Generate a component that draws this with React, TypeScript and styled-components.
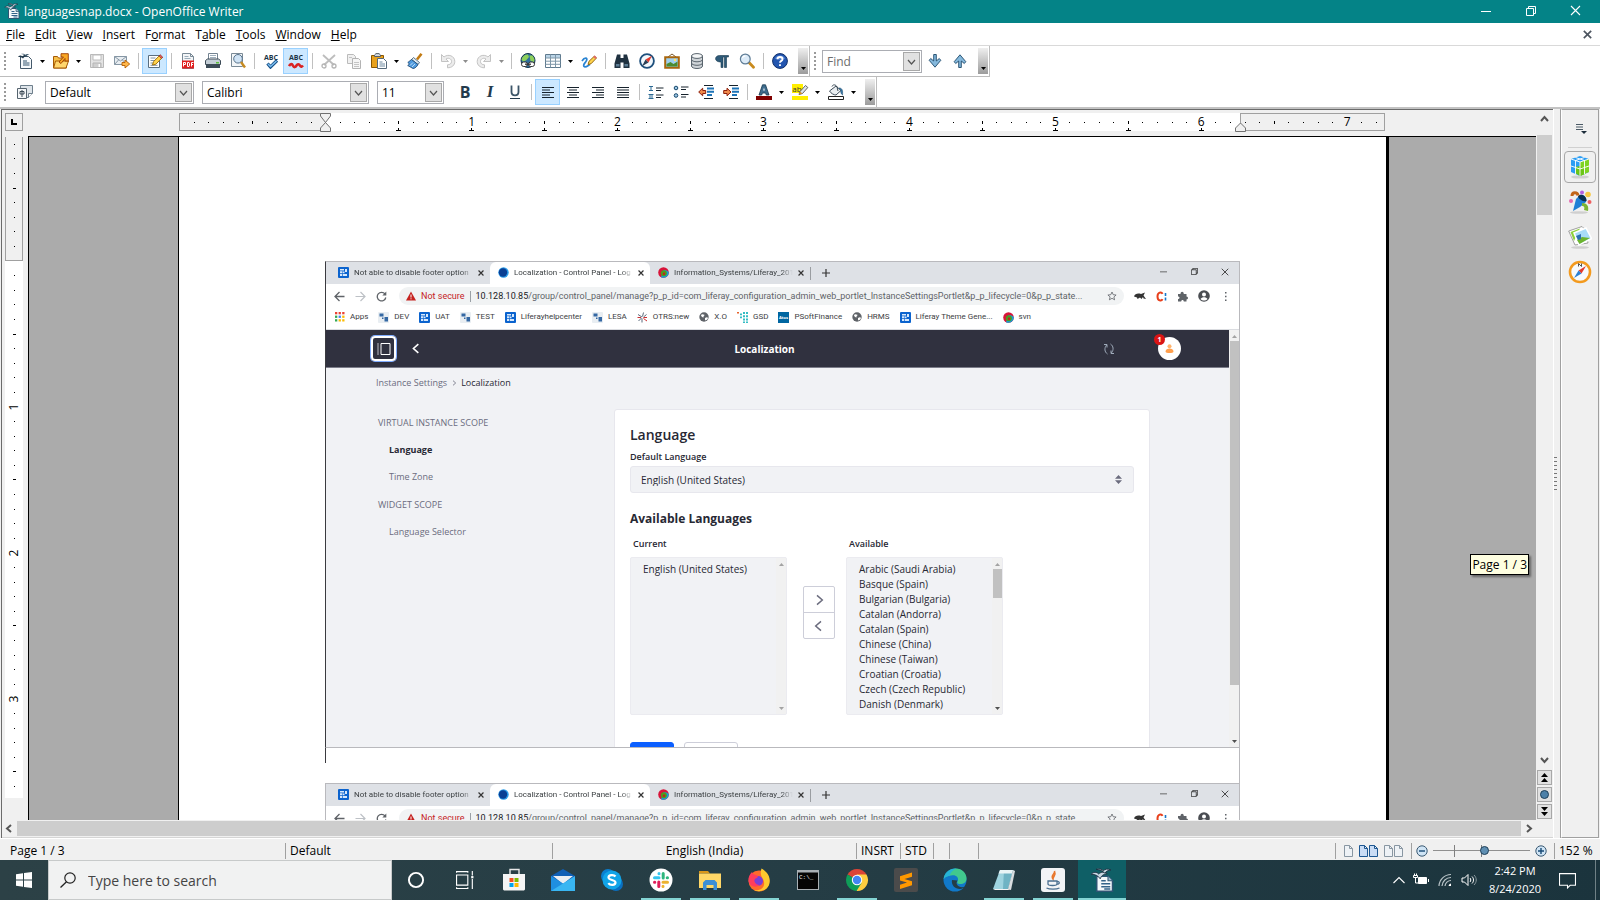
import React from "react";
import styled, { createGlobalStyle, css } from "styled-components";

const UI = `"Open Sans", "Noto Sans", "Liberation Sans", sans-serif`;

const GlobalStyle = createGlobalStyle`
  *, *::before, *::after { box-sizing: border-box; }
  body { margin: 0; font-family: ${UI}; font-size: 11px; color: #000; }
  button, input, select { font: inherit; color: inherit; margin: 0; }
  button { background: none; border: 0; padding: 0; display: flex; align-items: center; justify-content: center; }
  a { color: inherit; text-decoration: none; }
  ul { list-style: none; margin: 0; padding: 0; }
  h1, h2, h3, h4, p { margin: 0; }
  svg { display: block; flex: none; }
`;

/* ------------------------------------------------------------------ icons */

type IconProps = { size?: number; box?: string; children: React.ReactNode };
const Icon = ({ size = 16, box = "0 0 16 16", children }: IconProps) => (
  <svg width={size} height={size} viewBox={box} fill="none" aria-hidden="true">
    {children}
  </svg>
);

const WriterIcon = ({ size = 16 }: { size?: number }) => (
  <Icon size={size}>
    <path d="M4.500 5.500H12l3 3v7H4.500z" fill="#f4f8fb" stroke="#2c5573" />
    <path d="M12 5.500v3h3" fill="#9db9cc" stroke="#2c5573" strokeWidth=".7" />
    <path d="M7.500 8.500h3M7.500 10.500h6M7.500 12.500h6M9.500 14h4" stroke="#33638a" />
    <path d="M.8 4.200c1.500-1.700 3.700-1.700 5-.2 1.200-1.300 3.600-1.600 5.700-.2-2.300.2-4 1.200-4.700 3.400C5.500 5 3.200 4.200.8 4.200z" fill="#c9d8e3" stroke="#1b2f3f" strokeWidth=".6" />
    <path d="M4 .9c2-.7 3.800-.2 4.900.9C10.100.6 12 .4 14 1.300c-2 .2-3.400.9-4.200 2.200C8.700 1.900 6.500 1.100 4 .9z" fill="#c9d8e3" stroke="#1b2f3f" strokeWidth=".6" />
  </Icon>
);
const NewDoc = () => (
  <Icon>
    <path d="M3.500 3.500h8l3 3v9h-11z" fill="#f7fafc" stroke="#44596b" />
    <path d="M6 8h4M6 10h6.500M6 12h6.500" stroke="#33546f" />
    <path d="M1 4c1.500-2 3-2 4.500-.5 1-1.700 3-2 5-.5-2 0-3.500.8-4.500 2.500C5 4.300 3 4 1 4z" fill="#22394b" />
    <path d="M4 1c2-.8 3.500 0 4.300.8C9.300.8 11 .8 12.500 1.500c-1.500.2-2.700.8-3.500 1.900C7.900 2 6 1.300 4 1z" fill="#3f5a6e" />
  </Icon>
);
const OpenIcon = () => (
  <Icon>
    <path d="M.5 3.500h4l1 1.500h8v10H.5z" fill="#f7c14a" stroke="#a65a05" />
    <path d="M2.500 8h13l-2.500 7H.6z" fill="#ffd66e" stroke="#a65a05" />
    <path d="M6 9l4.500-5H8V.7h7.300V8H12V5.500L8 10.500z" fill="#f9a825" stroke="#9c3c00" strokeWidth=".9" />
  </Icon>
);
const SaveIcon = () => (
  <Icon>
    <path d="M1.500 1.500h13v13h-13z" fill="#e3e3e3" stroke="#b9b9b9" />
    <path d="M4 2h8v5H4z" fill="#fff" stroke="#bdbdbd" />
    <path d="M4 10h8v4.500H4z" fill="#cfcfcf" stroke="#b5b5b5" />
    <path d="M9.500 11h1.500v3H9.500z" fill="#fff" />
  </Icon>
);
const MailIcon = () => (
  <Icon>
    <path d="M.5 3.500h12v8H.5z" fill="#e8edf1" stroke="#8697a5" />
    <path d="M.5 3.500l6 4.500 6-4.500M.5 11.500L4.500 7M12.500 11.500L8.500 7" stroke="#8697a5" />
    <path d="M8 9.500h3V7l4.700 4-4.700 4v-2.500H8z" fill="#ffb74a" stroke="#b35c00" strokeWidth=".9" />
  </Icon>
);
const EditIcon = () => (
  <Icon>
    <path d="M1.500 2.500h11v12h-11z" fill="#fff" stroke="#5a6f80" />
    <path d="M3.500 5h5M3.500 7.500h5M3.500 10h3M3.500 12.300h7" stroke="#7d93a4" />
    <path d="M5.500 12l1-3.300L13 2l2.400 2.400-6.500 6.800z" fill="#ffd34d" stroke="#9b6a00" strokeWidth=".9" />
    <path d="M12 3l1.200-1.300 2.500 2.400-1.300 1.300z" fill="#e06060" stroke="#8a2020" strokeWidth=".6" />
  </Icon>
);
const PdfIcon = () => (
  <Icon>
    <path d="M2.500.5h8l3 3v12h-11z" fill="#f4f6f8" stroke="#7a8a96" />
    <path d="M10.500.5v3h3" stroke="#7a8a96" />
    <path d="M4.500 3.500h4M4.500 5.500h6" stroke="#9badba" />
    <path d="M2 7.500h12v8H2z" fill="#e02020" />
    <path d="M3.500 13.500v-4h2v2h-2M7.500 9.500v4h1.500l.5-.7V10.200L9 9.500zM11.500 13.500v-4h2M11.500 11.500h1.500" stroke="#fff" />
  </Icon>
);
const PrintIcon = () => (
  <Icon>
    <path d="M3.500.5h9V7h-9z" fill="#fff" stroke="#738391" />
    <path d="M5 2.500h6M5 4.500h6" stroke="#9fb0bd" />
    <path d="M.5 7.500l2-1.500h11l2 1.500v4H.5z" fill="#c4ced6" stroke="#3c4b57" />
    <path d="M1 11.500h14v3.500H1z" fill="#3c4b57" />
    <path d="M11 9h3v1.500h-3z" fill="#5bbf3a" />
  </Icon>
);
const PreviewIcon = () => (
  <Icon>
    <path d="M1.500.5h11v13h-11z" fill="#f3f6f8" stroke="#7a8a96" />
    <circle cx="8" cy="5.800" r="4.300" fill="#cfe3f5" stroke="#56718a" />
    <path d="M11 9l4 5.500" stroke="#c78b22" strokeWidth="2.400" />
  </Icon>
);
const AbcMark = ({ children }: { children: React.ReactNode }) => (
  <Icon>
    <text x="8" y="6.500" textAnchor="middle" fontSize="7" fontWeight="700" fontFamily={UI} fill="#1c3447">ABC</text>
    {children}
  </Icon>
);
const CutIcon = () => (
  <Icon>
    <path d="M2 2l11 10M14 2L3 12" stroke="#bdbdbd" strokeWidth="1.800" />
    <circle cx="3" cy="13" r="2" stroke="#b5b5b5" strokeWidth="1.300" />
    <circle cx="13" cy="13" r="2" stroke="#b5b5b5" strokeWidth="1.300" />
  </Icon>
);
const CopyIcon = () => (
  <Icon>
    <path d="M1.500 1.500h6l2 2v7h-8z" fill="#f0f0f0" stroke="#bbb" />
    <path d="M6.500 5.500h6l2 2v8h-8z" fill="#f5f5f5" stroke="#b3b3b3" />
    <path d="M3 4.500h3M8 9.500h5M8 11.500h5M8 13.500h5" stroke="#c4c4c4" />
  </Icon>
);
const PasteIcon = () => (
  <Icon>
    <path d="M.5 2.500h12v12H.5z" fill="#e8a11d" stroke="#8a5600" />
    <path d="M3.500 3.500V2L5 .6h3L9.500 2v1.500z" fill="#d6dade" stroke="#565f66" />
    <path d="M6.500 5.500h6l3 3v7h-9z" fill="#fff" stroke="#55697a" />
    <path d="M8.500 9h3M8.500 11h5.500M8.500 13h5.500" stroke="#6e8aa0" />
  </Icon>
);
const BrushIcon = () => (
  <Icon>
    <path d="M10 6.500L14.500.8" stroke="#c27a12" strokeWidth="2.600" />
    <path d="M6.500 4.500l6 5-1.500 2-6.500-5z" fill="#dfe8ef" stroke="#35556f" strokeWidth=".8" />
    <path d="M4.500 6.500l6.500 5c-1 2-3 4-5 4L.7 12.500l1.800-1.500L.8 9.500z" fill="#4f9ade" stroke="#16426f" strokeWidth=".8" />
    <path d="M3 12.500l3-3M5 14l3-3" stroke="#bcdcf7" />
  </Icon>
);
const UndoIcon = () => (
  <Icon>
    <path d="M1.500 1.500v7h7L6 6c2-1.500 5.500-.5 5.500 2.500 0 2-1.500 3.300-4 3.300v3c4.500 0 7.300-2.700 7.300-6.300C14.800 2.800 8 .5 4 4z" fill="#ececec" stroke="#bdbdbd" strokeWidth=".9" />
  </Icon>
);
const RedoIcon = () => (
  <Icon>
    <path d="M14.500 1.500v7h-7L10 6C8 4.500 4.500 5.500 4.500 8.500c0 2 1.500 3.300 4 3.300v3C4 14.800 1.200 12.100 1.200 8.500 1.200 2.800 8 .5 12 4z" fill="#ececec" stroke="#bdbdbd" strokeWidth=".9" />
  </Icon>
);
const LinkIcon = () => (
  <Icon>
    <circle cx="8" cy="7.500" r="7" fill="#2f6f9f" stroke="#12324a" />
    <path d="M1.500 6.500C2.500 2.500 6 1 8 1.500L9 4 6 7.500 3 8.500zM9.500 2.500h3l2 3.500-.5 3-3.500-1z" fill="#8ed05a" />
    <rect x="1.500" y="9" width="6" height="4.500" rx="2.200" fill="#fff" stroke="#333" />
    <rect x="8.500" y="9" width="6" height="4.500" rx="2.200" fill="#fff" stroke="#333" />
    <path d="M5 11.200h6" stroke="#333" strokeWidth="1.300" />
  </Icon>
);
const TableIcon = () => (
  <Icon>
    <path d="M.5 1.500h15v13H.5z" fill="#fff" stroke="#5f7a8e" />
    <path d="M1 2h14v3H1z" fill="#b9d3e6" />
    <path d="M.5 5h15M.5 8.200h15M.5 11.300h15M5.500 1.500v13M10.500 1.500v13" stroke="#7f97a8" />
  </Icon>
);
const DrawIcon = () => (
  <Icon>
    <path d="M1 8c2.500-4 6-3.500 4.500-.5-1 2.500-4 4-2.500 6 1.500 1.500 4-1 6-2" stroke="#2a84d2" strokeWidth="1.700" />
    <path d="M7 11.500l1-3.200L13.500 3l2 2-5.500 5.800z" fill="#ffd34d" stroke="#8a5a00" strokeWidth=".9" />
    <path d="M12.300 4l1.400-1.500 2 2-1.400 1.500z" fill="#e26a6a" />
  </Icon>
);
const BinocularsIcon = () => (
  <Icon>
    <path d="M3 1.500h3.500V5h3V1.500H13l2.500 9v4.500h-6V9.500h-3V15h-6v-4.500z" fill="#1f3140" />
    <path d="M2 11h3.500v2.500H2zM10.500 11H14v2.500h-3.500z" fill="#5d7d94" />
  </Icon>
);
const CompassIcon = () => (
  <Icon>
    <circle cx="8" cy="8" r="6.900" fill="#f2f8fd" stroke="#1d4f7c" strokeWidth="1.800" />
    <path d="M13 2.800L6.500 6.500l3 3z" fill="#e23a2e" />
    <path d="M3 13.200l3.500-6.700 3 3z" fill="#2b4056" />
  </Icon>
);
const GalleryIcon = () => (
  <Icon>
    <path d="M4 4l4-3 4 3" stroke="#7b5a2d" />
    <path d="M1.200 4.200h13.600v10.600H1.200z" fill="#9fd0ef" stroke="#a8660e" strokeWidth="2" />
    <path d="M2.500 11l4-2 3 2 4-2.500v5h-11z" fill="#4c8b2f" />
    <circle cx="11" cy="7" r="1.200" fill="#ffe46b" />
  </Icon>
);
const DatabaseIcon = () => (
  <Icon>
    <path d="M2.500 3v10c0 1.500 2.500 2.500 5.500 2.500s5.500-1 5.500-2.500V3z" fill="#cfd4d8" stroke="#59646d" />
    <ellipse cx="8" cy="3" rx="5.500" ry="2.400" fill="#f4f6f7" stroke="#59646d" />
    <path d="M2.500 6.500c0 1.300 2.500 2.300 5.500 2.300s5.500-1 5.500-2.300M2.500 10c0 1.300 2.500 2.300 5.500 2.300s5.500-1 5.500-2.300" stroke="#59646d" />
  </Icon>
);
const PilcrowIcon = () => (
  <Icon>
    <path d="M14.500 2.500V4h-2v10.500h-2V4H9v10.500H7V9C-.5 9 .5 2.500 5.500 2.500z" fill="#2e5a78" stroke="#16374d" strokeWidth=".6" />
  </Icon>
);
const MagnifierIcon = () => (
  <Icon>
    <path d="M10 9.500l4.500 4.700" stroke="#c98b1e" strokeWidth="2.800" strokeLinecap="round" />
    <circle cx="6.300" cy="6" r="4.900" fill="#dcebf8" stroke="#5f7d96" strokeWidth="1.200" />
    <path d="M3.500 5c.5-1.500 2-2 3-1.800" stroke="#fff" strokeWidth="1.200" />
  </Icon>
);
const HelpIcon = () => (
  <Icon>
    <circle cx="8" cy="8" r="7.400" fill="#2356b0" stroke="#0f2f6b" />
    <path d="M3 5.500C4.500 1.500 11.500 1.500 13 5.500 11 7 5 7 3 5.500z" fill="#5c8ad6" />
    <path d="M5.500 6.200c0-3 5-3 5 0 0 1.700-2.500 1.700-2.500 3.600M8 11.300v1.700" stroke="#fff" strokeWidth="1.900" />
  </Icon>
);
const ArrowDownIcon = () => (
  <Icon>
    <path d="M6.700 1.500h2.600V8l3-2.500 1.500 1.800L8 14.200 2.200 7.300l1.500-1.800 3 2.500z" fill="#84b8dc" stroke="#1e4a6b" strokeWidth=".9" />
  </Icon>
);
const ArrowUpIcon = () => (
  <Icon>
    <path d="M6.700 14.500h2.600V8l3 2.500 1.500-1.800L8 1.800 2.200 8.700l1.500 1.800 3-2.500z" fill="#84b8dc" stroke="#1e4a6b" strokeWidth=".9" />
  </Icon>
);
const StylesIcon = () => (
  <Icon>
    <path d="M3.500 1.500h12v8l-4 4h-8z" fill="#dfe5ea" stroke="#6e7f8c" />
    <path d="M15.500 9.500h-4v4" fill="#fff" stroke="#6e7f8c" />
    <path d="M.5 4.500h9v10h-9z" fill="#f4f6f8" stroke="#55636e" />
    <path d="M5 6v7M3 7.500h4v2.500H3z" stroke="#3c4b57" />
  </Icon>
);
const LetterIcon = ({ kind }: { kind: "B" | "I" | "U" }) => (
  <Icon size={20} box="0 0 20 20">
    {kind === "B" && (
      <text x="10" y="16" textAnchor="middle" fontFamily={UI} fontSize="16" fontWeight="700" fill="#233a4c">B</text>
    )}
    {kind === "I" && (
      <text x="10" y="15" textAnchor="middle" fontFamily="Liberation Serif, serif" fontSize="17" fontStyle="italic" fontWeight="700" fill="#233a4c">I</text>
    )}
    {kind === "U" && (
      <>
        <path d="M6.500 3.500V10c0 4.500 7 4.500 7 0V3.500" stroke="#3c5568" strokeWidth="1.800" />
        <path d="M5 16.500h10" stroke="#233a4c" />
      </>
    )}
  </Icon>
);
const AlignIcon = ({ kind }: { kind: "left" | "center" | "right" | "full" }) => {
  const widths = kind === "full" ? [12, 12, 12, 12, 12] : [12, 8, 12, 8, 12];
  return (
    <Icon>
      {widths.map((w, i) => {
        const x = kind === "right" ? 14 - w : kind === "center" ? 8 - w / 2 : 2;
        return <rect key={i} x={x} y={3 + i * 2.5} width={w} height="1" fill="#16222c" />;
      })}
    </Icon>
  );
};
const NumberListIcon = () => (
  <Icon>
    <path d="M1 2.500h4M3 2.500v4M1 6.500h4M.5 10.500h5M2 10.500v4M4 10.500v4M.5 14.500h5" stroke="#2c6a94" />
    <path d="M8 4h7.500M8 6.500h5M8 11h7.500M8 13.500h5" stroke="#16222c" />
  </Icon>
);
const BulletListIcon = () => (
  <Icon>
    <circle cx="3" cy="4" r="1.800" fill="#9cc6e4" stroke="#16486c" />
    <circle cx="3" cy="11.500" r="1.800" fill="#9cc6e4" stroke="#16486c" />
    <path d="M8 3h7.500M8 5.500h5M8 10.500h7.500M8 13h5" stroke="#16222c" />
  </Icon>
);
const IndentIcon = ({ out }: { out?: boolean }) => (
  <Icon>
    <path d="M6 1.500h9M6 14.500h9" stroke="#16222c" />
    <path d="M9 4.500h7M9 7.700h7M9 11h5" stroke="#1e74b8" strokeWidth="1.900" />
    {out ? (
      <path d="M.7 8l4-3.800v2.300h3v3h-3v2.300z" fill="#ef8a4c" stroke="#8d1f0b" />
    ) : (
      <path d="M8 8L4 4.200v2.300H.7v3H4v2.300z" fill="#ef8a4c" stroke="#8d1f0b" />
    )}
  </Icon>
);
const FontColorIcon = () => (
  <Icon>
    <path d="M6.500.8h3L13 11h-2.700l-.7-2H6.400l-.7 2H3z" fill="#3f6d8e" stroke="#17384f" strokeWidth=".8" />
    <path d="M7.200 6.500L8 3.500l.8 3z" fill="#fff" />
    <path d="M0 12h16v4H0z" fill="#800000" />
  </Icon>
);
const HighlightIcon = () => (
  <Icon size={20} box="0 0 20 20">
    <path d="M2 2h11v9H2zM2 14h16v4H2z" fill="#ffee00" />
    <text x="7" y="10" textAnchor="middle" fontFamily={UI} fontSize="8" fill="#333">ab</text>
    <path d="M9 12.500l1-3 5.500-6 2.300 2-5.300 6z" fill="#dde3e8" stroke="#555" strokeWidth=".9" />
    <path d="M9 12.500l1-3 2.500 2z" fill="#d09030" />
  </Icon>
);
const FillIcon = () => (
  <Icon>
    <path d="M1.500 7L8 2l5 4.500-5 4.500c-2 0-5-1.500-6.500-4z" fill="#e9edf0" stroke="#3c4b57" />
    <path d="M4 2.500C5 0 8 .5 9 3l1 4" stroke="#3c4b57" />
    <path d="M11 4c3 0 4 2 3.500 7-1.500-1-2-3-1.500-4.500z" fill="#3d82b5" stroke="#17486c" strokeWidth=".6" />
    <path d="M.5 12.500h15v3H.5z" fill="#fff" stroke="#222" />
  </Icon>
);

type ChevronProps = { dir: "up" | "down" | "left" | "right"; size?: number; color?: string; weight?: number };
const Chevron = ({ dir, size = 8, color = "#555", weight = 1.6 }: ChevronProps) => {
  const d = { up: "M1 6l3.500-4L8 6", down: "M1 3l3.500 4L8 3", left: "M6 1L2 4.500 6 8", right: "M3 1l4 3.500L3 8" }[dir];
  return (
    <Icon size={size} box="0 0 9 9"><path d={d} stroke={color} strokeWidth={weight} /></Icon>
  );
};
const Caret = ({ color = "#000", up }: { color?: string; up?: boolean }) => (
  <svg width="5" height="3" viewBox="0 0 5 3" aria-hidden="true"><path d={up ? "M0 3h5L2.500 0z" : "M0 0h5L2.500 3z"} fill={color} /></svg>
);
const Cross = ({ size = 11, color = "#fff", weight = 1.1 }: { size?: number; color?: string; weight?: number }) => (
  <Icon size={size} box="0 0 11 11"><path d="M1 1l9 9M10 1l-9 9" stroke={color} strokeWidth={weight} /></Icon>
);
const Restore = ({ size = 10, color = "#fff" }: { size?: number; color?: string }) => (
  <Icon size={size} box="0 0 10 10"><path d="M.5 2.500h7v7h-7zM2.500 2.500v-2h7v7h-2" stroke={color} /></Icon>
);
const Minimise = ({ size = 10, color = "#fff" }: { size?: number; color?: string }) => (
  <Icon size={size} box="0 0 10 10"><path d="M0 5.500h10" stroke={color} /></Icon>
);

/* ------------------------------------------------------------ application */

const Desktop = styled.div`
  display: flex;
  flex-direction: column;
  height: 100vh;
  background: #fff;
  overflow: hidden;
`;
const TitleBar = styled.header`
  flex: none;
  height: 23px;
  display: flex;
  align-items: center;
  gap: 4px;
  padding: 0 4px 2px;
  background: #048387;
  color: #fff;
  h1 { font-size: 12px; font-weight: 400; flex: 1; padding-top: 2px; }
`;
const WindowButton = styled.button`
  width: 41px;
  height: 20px;
`;
const MenuBar = styled.nav`
  flex: none;
  height: 23px;
  display: flex;
  align-items: center;
  gap: 10px;
  padding: 0 8px 0 6px;
  border-bottom: 1px solid #d9d9d9;
  font-size: 12px;
  button:last-child { margin-left: auto; }
`;
const Toolbars = styled.div`
  flex: none;
  border-bottom: 2px solid #c3c3c3;
`;
const ToolbarRow = styled.div`
  display: flex;
  width: max-content;
`;
const Toolbar = styled.div<{ $last?: boolean }>`
  height: ${(p) => (p.$last ? 30 : 31)}px;
  display: flex;
  align-items: center;
  border-right: 1px solid #bdbdbd;
  border-bottom: ${(p) => (p.$last ? 0 : 1)}px solid #bdbdbd;
`;
const Grip = styled.span`
  width: 2px;
  height: 18px;
  margin: 0 6px 0 4px;
  background: repeating-linear-gradient(#9a9a9a 0 2px, transparent 2px 4px);
`;
const ToolButton = styled.button<{ $on?: boolean }>`
  width: 25px;
  height: 26px;
  border: 1px solid ${(p) => (p.$on ? "#99d1ff" : "transparent")};
  background: ${(p) => (p.$on ? "#cce8ff" : "transparent")};
`;
const DropButton = styled.button`
  width: 11px;
  height: 26px;
`;
const Separator = styled.span`
  width: 8px;
  height: 16px;
  background: linear-gradient(#c0c0c0, #c0c0c0) center / 1px 100% no-repeat;
`;
const Overflow = styled.button`
  width: 10px;
  height: 26px;
  align-items: flex-end;
  padding-bottom: 4px;
  margin: 0 1px 0 6px;
  background: linear-gradient(#efefef, #9c9c9c);
`;
const Combo = styled.label<{ $w: number; $flush?: boolean }>`
  display: flex;
  align-items: center;
  width: ${(p) => p.$w}px;
  height: 23px;
  padding: 1px;
  margin-right: ${(p) => (p.$flush ? 0 : 8)}px;
  border: 1px solid #abadb3;
  background: #fff;
  font-size: 12px;
  select, input {
    flex: 1;
    min-width: 0;
    height: 100%;
    border: 0;
    outline: 0;
    background: none;
    appearance: none;
    padding: 0 3px;
  }
  input::placeholder { color: #6d6d6d; opacity: 1; }
`;
const StyleGroup = styled.div`
  display: flex;
  margin-left: 8px;
`;
const ComboArrow = styled.span`
  display: flex;
  align-items: center;
  justify-content: center;
  width: 17px;
  height: 19px;
  border: 1px solid #a8a8a8;
  background: #e1e1e1;
  pointer-events: none;
`;

type Tool = "|" | { n: string; i: React.ReactNode; on?: boolean; drop?: boolean; dim?: boolean };
const renderTools = (tools: Tool[]) =>
  tools.map((t, i) =>
    t === "|" ? (
      <Separator key={i} />
    ) : (
      <React.Fragment key={i}>
        <ToolButton $on={t.on} aria-label={t.n} aria-pressed={t.on}>{t.i}</ToolButton>
        {t.drop && <DropButton aria-label={`${t.n} options`}><Caret color={t.dim ? "#8d8d8d" : "#000"} /></DropButton>}
      </React.Fragment>
    )
  );

const standardTools: Tool[] = [
  { n: "New", i: <NewDoc />, drop: true },
  { n: "Open", i: <OpenIcon />, drop: true },
  { n: "Save", i: <SaveIcon /> },
  { n: "Document as E-mail", i: <MailIcon /> },
  "|",
  { n: "Edit File", i: <EditIcon />, on: true },
  "|",
  { n: "Export as PDF", i: <PdfIcon /> },
  { n: "Print", i: <PrintIcon /> },
  { n: "Page Preview", i: <PreviewIcon /> },
  "|",
  { n: "Spelling", i: <AbcMark><path d="M4.500 10.500l3 3.500L14 7.500" stroke="#17528a" strokeWidth="3.200" /><path d="M5 11l2.500 2.500L13.500 8" stroke="#7fc0f2" strokeWidth="1.400" /></AbcMark> },
  { n: "AutoSpellcheck", i: <AbcMark><path d="M1 13c1.500-2.500 3-2.500 4-.3s2.500 1.500 3.500-.2 2.500-1.500 3.500.2 2 1 3-.2" stroke="#d92323" strokeWidth="2.600" /></AbcMark>, on: true },
  "|",
  { n: "Cut", i: <CutIcon /> },
  { n: "Copy", i: <CopyIcon /> },
  { n: "Paste", i: <PasteIcon />, drop: true },
  { n: "Format Paintbrush", i: <BrushIcon /> },
  "|",
  { n: "Undo", i: <UndoIcon />, drop: true, dim: true },
  { n: "Redo", i: <RedoIcon />, drop: true, dim: true },
  "|",
  { n: "Hyperlink", i: <LinkIcon /> },
  { n: "Table", i: <TableIcon />, drop: true },
  { n: "Show Draw Functions", i: <DrawIcon /> },
  "|",
  { n: "Find & Replace", i: <BinocularsIcon /> },
  { n: "Navigator", i: <CompassIcon /> },
  { n: "Gallery", i: <GalleryIcon /> },
  { n: "Data Sources", i: <DatabaseIcon /> },
  { n: "Nonprinting Characters", i: <PilcrowIcon /> },
  { n: "Zoom", i: <MagnifierIcon /> },
  "|",
  { n: "Help", i: <HelpIcon /> },
];
const formatTools: Tool[] = [
  { n: "Bold", i: <LetterIcon kind="B" /> },
  { n: "Italic", i: <LetterIcon kind="I" /> },
  { n: "Underline", i: <LetterIcon kind="U" /> },
  "|",
  { n: "Align Left", i: <AlignIcon kind="left" />, on: true },
  { n: "Centered", i: <AlignIcon kind="center" /> },
  { n: "Align Right", i: <AlignIcon kind="right" /> },
  { n: "Justified", i: <AlignIcon kind="full" /> },
  "|",
  { n: "Numbering On/Off", i: <NumberListIcon /> },
  { n: "Bullets On/Off", i: <BulletListIcon /> },
  { n: "Decrease Indent", i: <IndentIcon out /> },
  { n: "Increase Indent", i: <IndentIcon /> },
  "|",
  { n: "Font Color", i: <FontColorIcon />, drop: true },
  { n: "Highlighting", i: <HighlightIcon />, drop: true },
  { n: "Background Color", i: <FillIcon />, drop: true },
];

/* -------------------------------------------------------------- workspace */

const Workspace = styled.main`
  flex: 1;
  min-height: 0;
  display: flex;
  background: #f0f0f0;
`;
const Editor = styled.section`
  flex: 1;
  min-width: 0;
  display: flex;
  flex-direction: column;
  margin-left: 1px;
  border-left: 1px solid #6b6b6b;
  border-top: 1px solid #6b6b6b;
`;
const EditorBody = styled.div`
  flex: 1;
  min-height: 0;
  display: flex;
`;
const Sheet = styled.div`
  flex: 1;
  min-width: 0;
  display: grid;
  grid-template: 26px minmax(0, 1fr) / 26px minmax(0, 1fr);
`;
const TabStop = styled.button`
  width: 18px;
  height: 18px;
  margin: 3px;
  border: 1px solid #a0a0a0;
`;
const RulerSlot = styled.div`
  display: flex;
  justify-content: center;
  padding: 3px 0 5px;
`;
const HRuler = styled.div`
  position: relative;
  flex: none;
  display: flex;
  width: 1206px;
  height: 18px;
`;
const marginArea = css`border: 1px solid #a0a0a0; background: #f0f0f0;`;
const HMargin = styled.div<{ $w: number }>`width: ${(p) => p.$w}px; ${marginArea}`;
const HBody = styled.div`flex: 1; background: #fff;`;
const Marks = styled.div<{ $vertical?: boolean }>`
  position: absolute;
  display: flex;
  ${(p) => (p.$vertical
    ? "flex-direction: column; left: 0; top: 0; width: 18px; height: 657px;"
    : "left: 8px; top: 0; width: 1197px; height: 18px;")}
`;
const Mark = styled.span<{ $stop?: boolean }>`
  position: relative;
  flex: 1 1 0;
  min-width: 0;
  min-height: 0;
  display: flex;
  align-items: center;
  justify-content: center;
  font-size: 12px;
  line-height: 14px;
  ${(p) => p.$stop && css`
    &::before, &::after { content: ""; position: absolute; background: #000; }
    &::before { left: 7px; bottom: 0; width: 1px; height: 3px; }
    &::after { left: 5px; bottom: 0; width: 5px; height: 1px; }
  `}
`;
const Tick = styled.i<{ $w: number; $h: number }>`
  width: ${(p) => p.$w}px;
  height: ${(p) => p.$h}px;
  background: #000;
`;
const Turned = styled.span`transform: rotate(-90deg);`;
const Handle = styled.span<{ $x: number }>`
  position: absolute;
  left: ${(p) => p.$x}px;
  top: 0;
`;
const VRuler = styled.div`
  position: relative;
  display: flex;
  flex-direction: column;
  width: 18px;
  margin: 1px 3px 22px;
  min-height: 0;
  overflow: hidden;
  background: #fff;
`;
const VMargin = styled.div`
  height: 124px;
  ${marginArea}
  border-top: 0;
`;
const Canvas = styled.div`
  position: relative;
  min-height: 0;
  overflow: hidden;
  display: flex;
  justify-content: center;
  align-items: flex-start;
  padding-left: 2px;
  border-left: 1px solid #000;
  border-top: 1px solid #000;
  background: #ababab;
`;
const Page = styled.article`
  flex: none;
  width: 1211px;
  min-height: 1500px;
  padding: 124px 146px 0;
  border-left: 1px solid #000;
  border-right: 3px solid #000;
  background: #fff;
`;
const Pictures = styled.div`
  width: 915px;
  border-right: 1px solid #b9b9bd;
`;
const Picture = styled.figure<{ $lead?: boolean }>`
  margin: 0;
  border-left: 1px solid ${(p) => (p.$lead ? "#3a3a3f" : "#b9b9bd")};
  border-top: 1px solid #b9b9bd;
  border-bottom: 1px solid #b9b9bd;
`;
const PictureGap = styled.div`
  height: 35px;
  background: linear-gradient(#3a3a3f, #3a3a3f) 0 0 / 1px 15px no-repeat;
`;
const PageTip = styled.div`
  position: absolute;
  right: 7px;
  top: 417px;
  padding: 0 1px;
  font-size: 12px;
  line-height: 19px;
  border: 1px solid #000;
  background: #ffffe1;
  box-shadow: 2px 2px 2px rgba(0, 0, 0, 0.4);
`;
const VScroll = styled.div`
  width: 16px;
  margin-left: 1px;
  display: flex;
  flex-direction: column;
  gap: 2px;
  padding: 0 1px 1px 0;
`;
const ScrollButton = styled.button`
  width: 15px;
  height: 18px;
  flex: none;
`;
const VTrack = styled.div`flex: 1; padding: 5px 0 0;`;
const VThumb = styled.div`height: 80px; width: 15px; background: #cdcdcd;`;
const PageButton = styled.button`
  width: 15px;
  height: 15px;
  flex: none;
  border: 1px solid #a8a8a8;
  background: #e1e1e1;
`;
const HScroll = styled.div`
  flex: none;
  height: 18px;
  display: flex;
  align-items: center;
  padding-right: 17px;
  border-bottom: 1px solid #d5d5d5;
`;
const HThumb = styled.div`flex: 1; height: 15px; background: #cdcdcd;`;
const Splitter = styled.div`
  width: 8px;
  display: flex;
  align-items: center;
  border-left: 1px solid #fff;
  border-right: 1px solid #a0a0a0;
  i {
    width: 3px;
    height: 34px;
    background: repeating-linear-gradient(#777 0 1px, transparent 1px 4px);
  }
`;
const Sidebar = styled.aside`
  width: 38px;
  margin-right: 1px;
  border: 1px solid #a0a0a0;
  border-left-color: #fff;
  display: flex;
  flex-direction: column;
  align-items: center;
  padding-top: 9px;
  gap: 3px;
  hr { width: 24px; margin: 5px 0 0; border: 0; border-top: 1px solid #d0d0d0; }
`;
const DeckButton = styled.button<{ $on?: boolean }>`
  width: 32px;
  height: 32px;
  border: 1px solid ${(p) => (p.$on ? "#a8a8a8" : "transparent")};
  border-radius: 4px;
`;

const marks = (from: number, to: number, vertical?: boolean) =>
  Array.from({ length: to - from + 1 }, (_, i) => {
    const k = from + i;
    const stop = !vertical && k > 0 && k <= 60 && k % 5 === 0;
    let body = <Tick $w={1} $h={1} />;
    if (k === 0) body = <></>;
    else if (k % 10 === 0) body = vertical ? <Turned>{k / 10}</Turned> : <>{k / 10}</>;
    else if (k % 5 === 0) body = vertical ? <Tick $w={3} $h={1} /> : <Tick $w={1} $h={3} />;
    return <Mark key={k} $stop={stop}>{body}</Mark>;
  });

/* ------------------------------------------------- browser shown in page */

const Browser = styled.div`
  background: #fff;
  color: #3c4043;
  font-family: Roboto, ${UI};
  font-size: 8px;
  line-height: 12px;
`;
const TabStrip = styled.div`
  display: flex;
  align-items: center;
  height: 22px;
  background: #dee1e6;
`;
const Tab = styled.div<{ $on?: boolean }>`
  display: flex;
  align-items: center;
  gap: 5px;
  width: 160px;
  height: 22px;
  padding: 0 6px 1px 8px;
  border-radius: 6px 6px 0 0;
  background: ${(p) => (p.$on ? "#fff" : "transparent")};
  &:first-child { margin-left: 4px; }
  span {
    flex: 1;
    min-width: 0;
    overflow: hidden;
    white-space: nowrap;
    mask-image: linear-gradient(90deg, #000 90%, transparent);
  }
`;
const TabDivider = styled.i`width: 1px; height: 13px; background: #9a9da1;`;
const BrowserWin = styled.div`
  display: flex;
  margin-left: auto;
  padding-bottom: 3px;
  button { width: 31px; height: 14px; }
  button:last-child { width: 29px; }
`;
const AddressRow = styled.div`
  display: flex;
  align-items: center;
  height: 24px;
  padding: 0 8px;
  gap: 10px;
  color: #5f6368;
`;
const AddressBar = styled.div`
  flex: 1;
  min-width: 0;
  display: flex;
  align-items: center;
  gap: 5px;
  height: 18px;
  margin: 0 0 0 2px;
  padding: 0 7px;
  border-radius: 9px;
  background: #f1f3f4;
  font-size: 9px;
  b { font-weight: 400; color: #c5221f; }
  i { width: 1px; height: 11px; background: #9aa0a6; }
  span { flex: 1; min-width: 0; white-space: nowrap; overflow: hidden; }
  em { font-style: normal; color: #202124; }
`;
const Bookmarks = styled.ul`
  display: flex;
  align-items: center;
  height: 22px;
  padding: 0 9px 3px;
  gap: 10px;
  border-bottom: 1px solid #dadce0;
  li a { display: flex; align-items: center; gap: 5px; white-space: nowrap; }
`;
const Portal = styled.div`
  display: flex;
  height: 417px;
  font-family: ${UI};
  font-size: 9px;
  color: #6b6c7e;
`;
const PortalMain = styled.div`
  flex: 1;
  min-width: 0;
  overflow: hidden;
  background: #f1f2f5;
`;
const ControlBar = styled.header`
  display: flex;
  align-items: center;
  height: 38px;
  padding: 0 48px 0 45px;
  border-bottom: 1px solid #7c7d8a;
  background: #30313f;
  color: #fff;
  h2 {
    flex: 1;
    padding-left: 4px;
    text-align: center;
    font-size: 10px;
    font-weight: 700;
  }
`;
const MenuToggle = styled.button`
  width: 25px;
  height: 25px;
  border: 2px solid #fff;
  border-radius: 4px;
  box-shadow: 0 0 0 1px #80acff;
`;
const BackLink = styled.a`margin-left: 15px;`;
const Avatar = styled.span`
  position: relative;
  display: flex;
  align-items: center;
  justify-content: center;
  width: 23px;
  height: 23px;
  margin-left: 43px;
  border-radius: 50%;
  background: #fff;
`;
const Badge = styled.span`
  position: absolute;
  left: -4px;
  top: -3px;
  width: 11px;
  height: 11px;
  border-radius: 50%;
  background: #da1414;
  color: #fff;
  font-size: 7px;
  line-height: 11px;
  font-weight: 700;
  text-align: center;
`;
const Crumbs = styled.nav`
  display: flex;
  align-items: center;
  gap: 4px;
  height: 30px;
  padding-left: 50px;
  b { font-weight: 400; color: #272833; }
`;
const PortalBody = styled.div`
  display: flex;
  padding: 11px 79px 0 52px;
`;
const ScopeNav = styled.nav`
  width: 236px;
  line-height: 27px;
  h3 { font-size: 9px; font-weight: 400; }
  ul { padding: 0 0 1px 11px; }
  b { color: #272833; }
`;
const Card = styled.section`
  flex: 1;
  height: 400px;
  padding: 15px 15px 0;
  border: 1px solid #e7e7ed;
  border-radius: 3px;
  background: #fff;
  color: #272833;
  h3 { font-size: 14px; line-height: 20px; font-weight: 600; }
  h4 { font-size: 12px; line-height: 18px; font-weight: 700; margin: 17px 0 0; }
`;
const FieldLabel = styled.label`
  display: block;
  font-weight: 600;
  line-height: 12px;
  padding: 6px 0 3px;
`;
const SelectBox = styled.span`
  display: flex;
  align-items: center;
  height: 27px;
  padding-right: 10px;
  border: 1px solid #e7e7ed;
  border-radius: 3px;
  background: #f1f2f5;
  select {
    flex: 1;
    border: 0;
    outline: 0;
    padding: 0 10px;
    background: none;
    appearance: none;
    font-size: 10px;
  }
`;
const Transfer = styled.div`
  display: flex;
  align-items: flex-start;
`;
const ListColumn = styled.div`
  width: 157px;
  label { display: block; font-weight: 600; line-height: 14px; padding: 9px 0 6px 3px; }
`;
const ListFrame = styled.div`
  display: flex;
  height: 158px;
  border: 1px solid #ebebf0;
  border-radius: 2px;
  background: #f1f2f5;
  overflow: hidden;
  select {
    flex: 1;
    min-width: 0;
    border: 0;
    outline: 0;
    padding: 4px 0 0 10px;
    background: none;
    font-size: 10px;
    scrollbar-width: none;
    overflow: hidden;
  }
  option { height: 15px; min-height: 15px; line-height: 15px; padding: 0 2px; }
`;
const MiniTrack = styled.div`
  width: 10px;
  display: flex;
  flex-direction: column;
  align-items: center;
  justify-content: space-between;
  padding: 5px 0 4px;
  background: #f1f1f1;
`;
const MiniThumb = styled.i<{ $h: number }>`
  width: 9px;
  height: ${(p) => p.$h}px;
  margin: 3px 0 auto;
  background: #c1c1c1;
`;
const MoveButtons = styled.div`
  width: 32px;
  margin: 58px 11px 0 16px;
  border: 1px solid #cdced9;
  border-radius: 2px;
  button { width: 30px; height: 25px; }
  button + button { height: 26px; border-top: 1px solid #cdced9; }
`;
const FormActions = styled.div`
  display: flex;
  gap: 10px;
  margin-top: 27px;
`;
const ActionButton = styled.button<{ $primary?: boolean }>`
  width: ${(p) => (p.$primary ? 44 : 54)}px;
  height: 26px;
  border-radius: 3px;
  border: 1px solid ${(p) => (p.$primary ? "#0b5fff" : "#cdced9")};
  background: ${(p) => (p.$primary ? "#0b5fff" : "#fff")};
`;

const LiferayIcon = ({ light }: { light?: boolean }) => (
  <Icon size={11} box="0 0 11 11">
    <rect width="11" height="11" rx="1" fill={light ? "#e9eef2" : "#0b63ce"} />
    {light ? (
      <path d="M1.500 1.500h4v3h-4zM6.500 5h3.500v4.500H6.500zM4 5.500h1.500V7H4z" fill="#3568a3" />
    ) : (
      <path d="M2 2h4v1.600H2zM2 4.300h2.500v2H2zM7 2h2v3H7zM5 4.500h1.500v1.800H5zM2 7h2v2H2zM4.700 7h4.300v2H4.700z" fill="#d6e8fb" />
    )}
  </Icon>
);
const SvnIcon = () => (
  <Icon size={11} box="0 0 11 11">
    <circle cx="5.500" cy="5.500" r="5.300" fill="#d8143a" />
    <path d="M10.800 5.500A5.300 5.300 0 0 1 3 10.200L5.500 3c3 0 5 1 5.300 2.500z" fill="#16a0d2" />
    <circle cx="5.800" cy="6.300" r="3" fill="#4e9a1e" />
    <circle cx="6" cy="6.800" r="1.200" fill="#c4221c" />
  </Icon>
);
const GlobeIcon = () => (
  <Icon size={10} box="0 0 10 10">
    <circle cx="5" cy="5" r="4.700" fill="#5f6368" />
    <path d="M2 3c1.500-1.500 2.500 0 3.500-.3C6 3.500 4 4 4.500 5S2 5 2 3zM6 6c1.500-1 2.500-1 3 0-.5 1.500-2 2.500-3 2.300z" fill="#fff" />
  </Icon>
);
const AppsIcon = () => (
  <Icon size={10} box="0 0 10 10">
    {["#ea4335", "#ea4335", "#ea4335", "#34a853", "#4285f4", "#fbbc05", "#34a853", "#fbbc05", "#fbbc05"].map((c, i) => (
      <rect key={i} x={(i % 3) * 3.6} y={Math.floor(i / 3) * 3.6} width="2.300" height="2.300" fill={c} />
    ))}
  </Icon>
);
const StarburstIcon = () => (
  <Icon size={11} box="0 0 11 11">
    <path d="M5.500 4.500l1-4M5 6.500v4M1 2.500l4 2.500M9.500 2.500L6.500 5M1.500 9l3-3" stroke="#5b6b7c" />
    <path d="M6.500 6.500l3.500 2.500M.5 5.500H4M6.500 5.500H10" stroke="#cc2f33" />
  </Icon>
);
const GsdIcon = () => (
  <Icon size={11} box="0 0 11 11">
    <path d="M4 1.500v1.700M7 0v2M10 0v2M4 4.500v1.700M7 3.300v2M10 3.300v2M7 6.500v2M10 6.500v2M10 9.500V11M7 9.500V11" stroke="#35bdc4" strokeWidth="2" />
    <path d="M0 0h2v1.500H0z" fill="#e6642d" />
  </Icon>
);
const PsoftIcon = () => (
  <Icon size={11} box="0 0 11 11">
    <rect width="11" height="11" fill="#0066a1" />
    <text x="5.500" y="7" textAnchor="middle" fontSize="4" fontWeight="700" fontFamily={UI} fill="#fff">Atos</text>
  </Icon>
);
const LocalIcon = () => (
  <Icon size={11} box="0 0 11 11">
    <circle cx="5.500" cy="5.500" r="5.200" fill="#2b9be8" />
    <circle cx="5" cy="5.500" r="4.200" fill="#0b3f93" />
  </Icon>
);

const bookmarks: [string, React.ReactNode][] = [
  ["Apps", <AppsIcon />],
  ["DEV", <LiferayIcon light />],
  ["UAT", <LiferayIcon />],
  ["TEST", <LiferayIcon light />],
  ["Liferayhelpcenter", <LiferayIcon />],
  ["LESA", <LiferayIcon light />],
  ["OTRS:new", <StarburstIcon />],
  ["X.O", <GlobeIcon />],
  ["GSD", <GsdIcon />],
  ["PSoftFinance", <PsoftIcon />],
  ["HRMS", <GlobeIcon />],
  ["Liferay Theme Gene...", <LiferayIcon />],
  ["svn", <SvnIcon />],
];
const tabs: [string, React.ReactNode][] = [
  ["Not able to disable footer option", <LiferayIcon />],
  ["Localization - Control Panel - Log", <LocalIcon />],
  ["Information_Systems/Liferay_201", <SvnIcon />],
];
const languages = [
  "Arabic (Saudi Arabia)", "Basque (Spain)", "Bulgarian (Bulgaria)", "Catalan (Andorra)", "Catalan (Spain)",
  "Chinese (China)", "Chinese (Taiwan)", "Croatian (Croatia)", "Czech (Czech Republic)", "Danish (Denmark)", "Dutch (Belgium)",
];

const BrowserChrome = () => (
  <>
    <TabStrip>
      {tabs.map(([name, icon], i) => (
        <Tab key={name} $on={i === 1}>
          {icon}
          <span>{name}</span>
          <button aria-label={`Close ${name}`}><Cross size={6} color="#333" weight={2.2} /></button>
        </Tab>
      ))}
      <TabDivider />
      <button aria-label="New tab">
        <Icon size={30} box="0 0 30 30"><path d="M11 15h8M15 11v8" stroke="#333" strokeWidth="1.200" /></Icon>
      </button>
      <BrowserWin>
        <button aria-label="Minimise"><Minimise size={7} color="#333" /></button>
        <button aria-label="Restore"><Restore size={7} color="#111" /></button>
        <button aria-label="Close"><Cross size={8} color="#333" weight={1.2} /></button>
      </BrowserWin>
    </TabStrip>
    <AddressRow>
      <Icon size={11} box="0 0 11 11"><path d="M10.500 5.500H1.500M5.500 1L1 5.500 5.500 10" stroke="#5f6368" strokeWidth="1.300" /></Icon>
      <Icon size={11} box="0 0 11 11"><path d="M.5 5.500h9M5.500 1L10 5.500 5.500 10" stroke="#bdc1c6" strokeWidth="1.200" /></Icon>
      <Icon size={11} box="0 0 11 11"><path d="M9 3A4.300 4.300 0 1 0 9.800 6.500" stroke="#5f6368" strokeWidth="1.300" /><path d="M10.300.5v4h-4z" fill="#5f6368" /></Icon>
      <AddressBar>
        <Icon size={10} box="0 0 10 10"><path d="M5 .5L10 9.500H0z" fill="#c5221f" /><path d="M5 3.500v3M5 7.300v1" stroke="#fff" /></Icon>
        <b>Not secure</b>
        <i />
        <span><em>10.128.10.85</em>/group/control_panel/manage?p_p_id=com_liferay_configuration_admin_web_portlet_InstanceSettingsPortlet&amp;p_p_lifecycle=0&amp;p_p_state...</span>
        <Icon size={10} box="0 0 10 10"><path d="M5 1l1.200 2.700 2.900.3-2.200 1.900.7 2.900L5 7.300 2.400 8.800l.7-2.900L.9 4l2.900-.3z" stroke="#5f6368" strokeWidth=".8" /></Icon>
      </AddressBar>
      <Icon size={12} box="0 0 12 12"><path d="M0 6.500C1 3.500 4 3 7 4l4-1.500L9.500 5.500 12 9l-2.500-.5L9 7 7.500 9 6 7.500 3.500 9 3 7.500z" fill="#333" /></Icon>
      <Icon size={11} box="0 0 11 11"><path d="M6.500 2.800C5.500.5 1.500 1 1.500 5.500s4 5 5 2.700" stroke="#e8401c" strokeWidth="2" /><path d="M9.500 2v3M9.500 6.500v3" stroke="#1877c9" strokeWidth="1.600" /></Icon>
      <Icon size={11} box="0 0 11 11"><path d="M1 3h2.500c0-3 3.300-3 3.300 0H9.500v2.500c2 0 2 3 0 3V10.500H6.800c0-2-2.600-2-2.600 0H1V8C3 8 3 5.500 1 5.500z" fill="#5f6368" /></Icon>
      <Icon size={12} box="0 0 12 12"><circle cx="6" cy="6" r="5.800" fill="#4a4d52" /><circle cx="6" cy="4.500" r="2" fill="#fff" /><path d="M2.500 9c1.500-2.500 5.500-2.500 7 0-2 2-5 2-7 0z" fill="#fff" /></Icon>
      <Icon size={11} box="0 0 11 11"><path d="M5 1h1.500v1.500H5zM5 4.700h1.500v1.500H5zM5 8.400h1.500v1.500H5z" fill="#5f6368" /></Icon>
    </AddressRow>
  </>
);

const LanguageList = ({ id, label, items, thumb }: { id: string; label: string; items: string[]; thumb?: boolean }) => (
  <ListColumn>
    <label htmlFor={id}>{label}</label>
    <ListFrame>
      <select id={id} multiple>
        {items.map((l) => <option key={l}>{l}</option>)}
      </select>
      <MiniTrack>
        <Caret up color="#a3a3a3" />
        {thumb && <MiniThumb $h={29} />}
        <Caret color={thumb ? "#505050" : "#a3a3a3"} />
      </MiniTrack>
    </ListFrame>
  </ListColumn>
);

const BrowserPicture = () => (
  <Browser>
    <BrowserChrome />
    <Bookmarks>
      {bookmarks.map(([name, icon]) => (
        <li key={name}><a href="#bookmark">{icon}{name}</a></li>
      ))}
    </Bookmarks>
    <Portal>
      <PortalMain>
        <ControlBar>
          <MenuToggle aria-label="Product menu">
            <Icon size={14} box="0 0 14 14"><path d="M1 1v12" stroke="#b7b8c2" /><path d="M4 1.500h9v11H4z" stroke="#fff" /></Icon>
          </MenuToggle>
          <BackLink href="#back" aria-label="Back"><Chevron dir="left" size={11} color="#fff" weight={1.3} /></BackLink>
          <h2>Localization</h2>
          <Icon size={12} box="0 0 12 12"><path d="M4.500 11C1.500 9 1 5 3.700 2M1 1.500h3v3M7.500 1C10.500 3 11 7 8.300 10M11 10.500H8v-3" stroke="#9fabba" /></Icon>
          <Avatar>
            <Icon size={9} box="0 0 9 9"><circle cx="4.500" cy="2.200" r="2" fill="#ffb46e" /><path d="M.5 7.500c0-4 8-4 8 0 0 2-8 2-8 0z" fill="#ff9f4d" /></Icon>
            <Badge>1</Badge>
          </Avatar>
        </ControlBar>
        <Crumbs aria-label="Breadcrumb">
          <a href="#settings">Instance Settings</a>
          <Chevron dir="right" size={6} color="#6b6c7e" weight={1.2} />
          <b>Localization</b>
        </Crumbs>
        <PortalBody>
          <ScopeNav>
            <h3>VIRTUAL INSTANCE SCOPE</h3>
            <ul>
              <li><a href="#language"><b>Language</b></a></li>
              <li><a href="#time-zone">Time Zone</a></li>
            </ul>
            <h3>WIDGET SCOPE</h3>
            <ul>
              <li><a href="#selector">Language Selector</a></li>
            </ul>
          </ScopeNav>
          <Card>
            <h3>Language</h3>
            <FieldLabel htmlFor="default-language">Default Language</FieldLabel>
            <SelectBox>
              <select id="default-language" defaultValue="us"><option value="us">English (United States)</option></select>
              <Icon size={9} box="0 0 9 9"><path d="M1 3.700L4.500 0 8 3.700zM1 5.300L4.500 9 8 5.300z" fill="#6b6c7e" /></Icon>
            </SelectBox>
            <h4>Available Languages</h4>
            <Transfer>
              <LanguageList id="current" label="Current" items={["English (United States)"]} />
              <MoveButtons>
                <button aria-label="Move right"><Chevron dir="right" size={12} color="#6b6c7e" weight={1.1} /></button>
                <button aria-label="Move left"><Chevron dir="left" size={12} color="#6b6c7e" weight={1.1} /></button>
              </MoveButtons>
              <LanguageList id="available" label="Available" items={languages} thumb />
            </Transfer>
            <FormActions>
              <ActionButton $primary aria-label="Save" />
              <ActionButton aria-label="Cancel" />
            </FormActions>
          </Card>
        </PortalBody>
      </PortalMain>
      <MiniTrack>
        <Caret up color="#a3a3a3" />
        <MiniThumb $h={344} />
        <Caret color="#505050" />
      </MiniTrack>
    </Portal>
  </Browser>
);

/* ------------------------------------------------------ status & taskbar */

const StatusBar = styled.footer`
  flex: none;
  height: 22px;
  display: flex;
  align-items: center;
  padding-top: 2px;
  background: #f0f0f0;
  border-top: 1px solid #fff;
`;
const Cell = styled.div<{ $w?: number; $center?: boolean }>`
  ${(p) => (p.$w ? `width: ${p.$w}px;` : "flex: 1;")}
  height: 16px;
  display: flex;
  align-items: center;
  justify-content: ${(p) => (p.$center ? "center" : "flex-start")};
  gap: 5px;
  padding-left: ${(p) => (p.$center ? 0 : 4)}px;
  white-space: nowrap;
  font-size: 12px;
  border-left: 1px solid #a0a0a0;
  &:first-child { border: 0; padding-left: 10px; }
`;
const ZoomSlider = styled.input`
  appearance: none;
  width: 97px;
  height: 12px;
  background:
    linear-gradient(#808080, #808080) 21px 0 / 1px 100% no-repeat,
    linear-gradient(#808080, #808080) 48px 0 / 1px 100% no-repeat,
    linear-gradient(#909090, #909090) 0 5px / 100% 1px no-repeat;
  &::-webkit-slider-thumb {
    appearance: none;
    width: 9px;
    height: 9px;
    border: 1px solid #1f3f58;
    border-radius: 50%;
    background: #5f8fb3;
  }
`;
const Taskbar = styled.footer`
  flex: none;
  height: 40px;
  display: flex;
  background: linear-gradient(90deg, #2c4146, #253d45 50%, #1b343d);
  color: #fff;
`;
const StartButton = styled.button`width: 48px;`;
const SearchBox = styled.label`
  width: 344px;
  display: flex;
  align-items: center;
  gap: 12px;
  padding-left: 11px;
  border: 1px solid #c7caca;
  background: #f1f2f2;
  input {
    flex: 1;
    min-width: 0;
    border: 0;
    outline: 0;
    padding: 0;
    background: none;
    font-size: 14px;
  }
  input::placeholder { color: #444; opacity: 1; }
`;
const TaskButton = styled.button<{ $state?: "open" | "active" }>`
  width: 48px;
  margin-right: 1px;
  background-color: ${(p) => (p.$state === "active" ? "#0f5f66" : "transparent")};
  ${(p) => p.$state && css`
    background-image: linear-gradient(#84d4d3, #84d4d3);
    background-position: center bottom;
    background-repeat: no-repeat;
    background-size: ${p.$state === "active" ? 48 : 40}px 2px;
  `}
`;
const Tray = styled.div`
  margin-left: auto;
  display: flex;
  align-items: center;
  gap: 8px;
`;
const Clock = styled.time`
  width: 60px;
  text-align: center;
  line-height: 18px;
`;
const Notify = styled.button`
  width: 40px;
  height: 40px;
  margin: 0 -8px 0 -6px;
`;
const ShowDesktop = styled.button`
  width: 5px;
  height: 40px;
  margin-left: 8px;
  border-left: 1px solid #6f8186;
`;

const apps: { n: string; s?: "open" | "active"; i: React.ReactNode }[] = [
  { n: "Cortana", i: <Icon size={18}><circle cx="8" cy="8" r="6.300" stroke="#fff" strokeWidth="1.700" /></Icon> },
  { n: "Task View", i: <Icon size={18}><path d="M.5 3.500h10v9H.5zM.5 1.500V.5h10v1M.5 14.500v1h10v-1M14.500 0v4M14.500 7v9" stroke="#fff" /><path d="M13.500 4.500h2v2h-2z" fill="#fff" /></Icon> },
  { n: "Microsoft Store", i: (
    <Icon size={24} box="0 0 24 24"><path d="M8 6V1.500h9V6" stroke="#e8e8e8" strokeWidth="1.400" /><path d="M1 6h22v15.500l-1 1H2l-1-1z" fill="#f5f5f5" /><path d="M7.500 10h4v4h-4z" fill="#f25022" /><path d="M12.500 10h4v4h-4z" fill="#7fba00" /><path d="M7.500 15h4v4h-4z" fill="#00a4ef" /><path d="M12.500 15h4v4h-4z" fill="#ffb900" /></Icon>
  ) },
  { n: "Mail", i: (
    <Icon size={24} box="0 0 24 24"><path d="M0 8l12-7 12 7v15H0z" fill="#0f5fb5" /><path d="M2 8h20l-10 8z" fill="#e9eef2" /><path d="M0 8l24 15H0z" fill="#1f8fe0" /><path d="M24 8v15H0z" fill="#39b6f2" /></Icon>
  ) },
  { n: "Skype", i: (
    <Icon size={24} box="0 0 24 24"><circle cx="8" cy="8" r="7" fill="#0a7fd0" /><circle cx="16" cy="16" r="7" fill="#0a6fc0" /><circle cx="12" cy="12" r="9.500" fill="#11a4e8" /><path d="M15.500 8.500C14 6.500 8.500 6.500 8.500 9.500s7 2 7 5-5.500 3-7.200.6" stroke="#fff" strokeWidth="2.200" /></Icon>
  ) },
  { n: "Slack", s: "open", i: (
    <Icon size={24} box="0 0 24 24"><circle cx="12" cy="12" r="11.500" fill="#fff" /><g strokeWidth="3" strokeLinecap="round"><path d="M5.500 9.800H10M10 5.500v.3" stroke="#36c5f0" /><path d="M14.200 5.500V10M18.500 9.800h-.3" stroke="#2eb67d" /><path d="M14 14.200h4.500M14 18.500v-.3" stroke="#ecb22e" /><path d="M9.800 14v4.500M5.500 14.200h.3" stroke="#e01e5a" /></g></Icon>
  ) },
  { n: "File Explorer", s: "open", i: (
    <Icon size={24} box="0 0 24 24"><path d="M1 3h9l2 2.500H1z" fill="#d9971a" /><path d="M1 5.500h22V20H1z" fill="#ffd767" /><path d="M5 22v-7.500L7.500 12h9l2.500 2.500V22h-3.500v-5h-7v5z" fill="#3c8fd6" /></Icon>
  ) },
  { n: "Firefox", s: "open", i: (
    <Icon size={24} box="0 0 24 24"><circle cx="12" cy="13" r="10.500" fill="#ff6a2b" /><path d="M14.500.5C22 5 24 11 22 17c-2 5-9 8-15 5 7 1 11-3 10-8-.5-4-5-6-2.500-13.500z" fill="#ffc92e" /><circle cx="11" cy="13" r="5" fill="#7b3fd4" /><path d="M1.500 13C1 9 3 6 5 4c.5 2 2 2.500 4 3 3 .5 2 3-.5 3.500C6 12 8 17 12.500 17c-3 3-10 2-11-4z" fill="#ff3d5c" /></Icon>
  ) },
  { n: "Command Prompt", i: (
    <Icon size={24} box="0 0 24 24"><path d="M1 2h22v20H1z" fill="#a9b0b5" /><path d="M2 4.500h20V21H2z" fill="#050505" /><text x="3" y="11" fontSize="6" fontFamily="Liberation Mono, monospace" fill="#eee">C:\_</text></Icon>
  ) },
  { n: "Google Chrome", s: "open", i: (
    <Icon size={24} box="0 0 24 24"><path d="M12 12L2.500 6.500A11 11 0 0 1 21.500 6.500z" fill="#db4437" /><path d="M12 6.500h9.500A11 11 0 0 1 11.500 23L12 12z" fill="#ffcd40" /><path d="M12 12l4.500 3L11.500 23A11 11 0 0 1 2.500 6.500z" fill="#0f9d58" /><circle cx="12" cy="12" r="5.200" fill="#fff" /><circle cx="12" cy="12" r="4.200" fill="#4285f4" /></Icon>
  ) },
  { n: "Sublime Text", i: (
    <Icon size={24} box="0 0 24 24"><rect width="24" height="24" rx="2" fill="#4b4b4b" /><path d="M18 4.500v4.200L10.500 11l7.500 2.300v4L6 21v-4.200l7-2.200-7-2.200V8.200z" fill="#ff9800" /></Icon>
  ) },
  { n: "Microsoft Edge", i: (
    <Icon size={24} box="0 0 24 24"><circle cx="12" cy="12" r="11.500" fill="#1179c9" /><path d="M.7 11C2 3 9 .5 13 .6c6 .2 10.600 4.500 10.500 10 0 4-3 5.500-6 5.500-3.500 0-3.500-1.500-3-2.500 2-4-1.500-6.600-5-6.300C5 7.500 2 9 .7 11z" fill="#41c98e" /><path d="M.7 11C2 3 9 .5 13 .6c-4 2-6 5-6 7C4 8.500 2 9 .7 11z" fill="#26b4d6" /><path d="M9 12c-1 5 3 9 8 9 2 0 4-1 5-2.500-3 1.500-6.500.5-8-2-1-1.500 0-3 .5-4z" fill="#253d45" /></Icon>
  ) },
  { n: "Notepad", s: "open", i: (
    <Icon size={24} box="0 0 24 24"><path d="M8 2h13l-5 19H1z" fill="#9ed3df" /><path d="M12 2h9l-5 19h-5z" fill="#6fb3c4" /><path d="M8 2h13l-1 3.500H6.500z" fill="#e9f4f6" /><path d="M16 21l5-19 2 1-4 19z" fill="#d8dde0" /><path d="M1 21h15l3 1H3z" fill="#f3f3f3" /></Icon>
  ) },
  { n: "Java", s: "open", i: (
    <Icon size={24} box="0 0 24 24"><rect width="24" height="24" rx="3" fill="#f2f4f6" /><path d="M13.500 3c1 3-4.500 4-1.500 8 0-3 3.500-3.500 1.500-8z" stroke="#e8762c" strokeWidth="1.500" /><path d="M7 13h9v3c0 2-9 2-9 0zM16 13.500c3-.5 3 3 0 2.700M5.500 20c3 1.500 10 1.500 13 0" stroke="#4a6f90" strokeWidth="1.300" /></Icon>
  ) },
  { n: "OpenOffice Writer", s: "active", i: <WriterIcon size={24} /> },
];

const PageGlyph = ({ pages, color }: { pages: 1 | 2; color: string }) => (
  <svg width={pages * 10} height="12" viewBox={`0 0 ${pages * 10} 12`} fill={color === "#1d5792" ? "#c9dcf5" : "#eef2f6"} stroke={color} aria-hidden="true">
    <path d="M.5.5h5l3 3v8h-8zM5.500.5v3h3" />
    {pages === 2 && <path d="M10.500.5h5l3 3v8h-8zM15.500.5v3h3" />}
  </svg>
);
const ZoomGlyph = ({ plus }: { plus?: boolean }) => (
  <Icon size={12} box="0 0 12 12">
    <circle cx="6" cy="6" r="5.200" fill="#cfe4f5" stroke="#3b5a73" />
    <path d={plus ? "M3 6h6M6 3v6" : "M3 6h6"} stroke="#174a75" strokeWidth="1.400" />
  </Icon>
);

const startMenus = ["File", "Edit", "View", "Insert"];
const endMenus = ["Tools", "Window", "Help"];

export default function App() {
  return (
    <>
      <GlobalStyle />
      <Desktop>
        <TitleBar>
          <WriterIcon />
          <h1>languagesnap.docx - OpenOffice Writer</h1>
          <WindowButton aria-label="Minimise"><Minimise /></WindowButton>
          <WindowButton aria-label="Restore"><Restore /></WindowButton>
          <WindowButton aria-label="Close"><Cross /></WindowButton>
        </TitleBar>
        <MenuBar>
          {startMenus.map((m) => <button key={m}><span><u>{m[0]}</u>{m.slice(1)}</span></button>)}
          <button><span>F<u>o</u>rmat</span></button>
          <button><span>T<u>a</u>ble</span></button>
          {endMenus.map((m) => <button key={m}><span><u>{m[0]}</u>{m.slice(1)}</span></button>)}
          <button aria-label="Close document"><Cross size={9} color="#4d5560" weight={2} /></button>
        </MenuBar>
        <Toolbars>
          <ToolbarRow>
            <Toolbar>
              <Grip />
              {renderTools(standardTools)}
              <Overflow aria-label="Standard toolbar options"><Caret /></Overflow>
            </Toolbar>
            <Toolbar>
              <Grip />
              <Combo $w={100} $flush>
                <input aria-label="Find text" placeholder="Find" />
                <ComboArrow><Chevron dir="down" size={9} weight={1.2} /></ComboArrow>
              </Combo>
              <ToolButton aria-label="Find next"><ArrowDownIcon /></ToolButton>
              <ToolButton aria-label="Find previous"><ArrowUpIcon /></ToolButton>
              <Overflow aria-label="Find toolbar options"><Caret /></Overflow>
            </Toolbar>
          </ToolbarRow>
          <ToolbarRow>
            <Toolbar $last>
              <Grip />
              <ToolButton aria-label="Styles and Formatting"><StylesIcon /></ToolButton>
              <StyleGroup>
                <Combo $w={149}>
                  <select aria-label="Apply style"><option>Default</option></select>
                  <ComboArrow><Chevron dir="down" size={9} weight={1.2} /></ComboArrow>
                </Combo>
                <Combo $w={167}>
                  <select aria-label="Font name"><option>Calibri</option></select>
                  <ComboArrow><Chevron dir="down" size={9} weight={1.2} /></ComboArrow>
                </Combo>
                <Combo $w={67}>
                  <select aria-label="Font size"><option>11</option></select>
                  <ComboArrow><Chevron dir="down" size={9} weight={1.2} /></ComboArrow>
                </Combo>
              </StyleGroup>
              {renderTools(formatTools)}
              <Overflow aria-label="Formatting toolbar options"><Caret /></Overflow>
            </Toolbar>
          </ToolbarRow>
        </Toolbars>

        <Workspace>
          <Editor>
            <EditorBody>
              <Sheet>
                <TabStop aria-label="Left tab">
                  <Icon size={8} box="0 0 8 8"><path d="M2 1v5h5" stroke="#000" strokeWidth="2" /></Icon>
                </TabStop>
                <RulerSlot>
                  <HRuler>
                    <HMargin $w={147} />
                    <HBody />
                    <HMargin $w={145} />
                    <Marks>{marks(-9, 72)}</Marks>
                    <Handle $x={141}>
                      <svg width="11" height="19" viewBox="0 0 11 19" fill="#f0f0f0" stroke="#707070" aria-hidden="true">
                        <path d="M.5.5h10v2.500L5.500 9.500.5 3zM.5 18.500h10V15L5.500 9.500.5 15z" />
                      </svg>
                    </Handle>
                    <Handle $x={1056}>
                      <svg width="11" height="19" viewBox="0 0 11 19" fill="#f0f0f0" stroke="#707070" aria-hidden="true">
                        <path d="M.5 18.500h10V15l-5-5-5 5z" />
                      </svg>
                    </Handle>
                  </HRuler>
                </RulerSlot>
                <VRuler>
                  <VMargin />
                  <Marks $vertical>{marks(-8, 36, true)}</Marks>
                </VRuler>
                <Canvas>
                  <Page>
                    <Pictures>
                      <Picture $lead><BrowserPicture /></Picture>
                      <PictureGap />
                      <Picture><Browser><BrowserChrome /></Browser></Picture>
                    </Pictures>
                  </Page>
                  <PageTip role="tooltip">Page 1 / 3</PageTip>
                </Canvas>
              </Sheet>
              <VScroll>
                <ScrollButton aria-label="Scroll up"><Chevron dir="up" size={9} weight={2} /></ScrollButton>
                <VTrack><VThumb /></VTrack>
                <ScrollButton aria-label="Scroll down"><Chevron dir="down" size={9} weight={2} /></ScrollButton>
                <PageButton aria-label="Previous page">
                  <Icon size={9} box="0 0 9 9"><path d="M1 4l3.500-4L8 4zM1 9l3.500-4L8 9z" fill="#000" /></Icon>
                </PageButton>
                <PageButton aria-label="Navigation">
                  <Icon size={9} box="0 0 9 9"><circle cx="4.500" cy="4.500" r="4" fill="#4c80a8" stroke="#1f3f58" /></Icon>
                </PageButton>
                <PageButton aria-label="Next page">
                  <Icon size={9} box="0 0 9 9"><path d="M1 0l3.500 4L8 0zM1 5l3.500 4L8 5z" fill="#000" /></Icon>
                </PageButton>
              </VScroll>
            </EditorBody>
            <HScroll>
              <ScrollButton aria-label="Scroll left"><Chevron dir="left" size={9} weight={2} /></ScrollButton>
              <HThumb />
              <ScrollButton aria-label="Scroll right"><Chevron dir="right" size={9} weight={2} /></ScrollButton>
            </HScroll>
          </Editor>
          <Splitter><i /></Splitter>
          <Sidebar>
            <button aria-label="Sidebar settings">
              <Icon size={20} box="0 0 20 20"><path d="M6 5.500h7M6 8h7M6 10.500h7" stroke="#4b5a66" /><path d="M11 12h6l-3 3z" fill="#1c2c3a" /></Icon>
            </button>
            <hr />
            <DeckButton $on aria-label="Properties">
              <Icon size={24} box="0 0 24 24">
                <ellipse cx="12" cy="22" rx="9" ry="1.600" fill="#cfcfcf" />
                <path d="M12 1l9 3v13l-9 4-9-4V4z" fill="#2a9df4" />
                <path d="M12 7l9-3v13l-9 4z" fill="#7ed321" />
                <path d="M7 12l5-1 5 2v6l-5 2-5-3z" fill="#6cc516" />
                <path d="M3 4l9 3 9-3M12 7v14M3 11l9 3 9-3M7.500 2.500l9 3M16.500 2.500l-9 3v13.500M16.500 5.500V19" stroke="#fff" strokeWidth=".9" />
              </Icon>
            </DeckButton>
            <DeckButton aria-label="Styles and Formatting">
              <Icon size={24} box="0 0 24 24">
                <ellipse cx="11" cy="22.500" rx="9" ry="1.300" fill="#cfcfcf" />
                <path d="M5 21L8 9l4-4c4-1 7 3 6 7l-6 5z" fill="#1f7fd6" />
                <path d="M10 6c3-3 9 0 8.500 5-2 1-8-1-8.500-5z" fill="#0b2f50" />
                <path d="M4 6c0-4.500 5.500-4 6-.5" stroke="#c1651a" strokeWidth="3" />
                <path d="M14 13c5 0 7 3 6 8l-4-1c1-3 0-4-2-4z" fill="#7cb532" />
                <circle cx="14" cy="2.500" r="2" fill="#b45fe0" /><circle cx="20" cy="4.500" r="2.800" fill="#f7c945" />
                <circle cx="3" cy="11" r="2" fill="#e66bb0" /><circle cx="21.500" cy="12" r="2" fill="#ef5f5f" />
              </Icon>
            </DeckButton>
            <DeckButton aria-label="Gallery">
              <Icon size={24} box="0 0 24 24">
                <ellipse cx="12" cy="22.500" rx="9" ry="1.300" fill="#cfcfcf" />
                <path d="M.7 6L14 1.500l3 3L20 18l-13 2z" fill="#fff" stroke="#8a8a8a" strokeWidth=".8" />
                <path d="M2.500 7L12 3.500 6 16z" fill="#8ed13c" />
                <path d="M6 8l12-5 5.500 10.500L11 20z" fill="#a8dcf8" stroke="#fff" strokeWidth="1.600" />
                <path d="M9 15l5-3 8 1-10.500 6z" fill="#6db52f" /><path d="M8 11l5-2v5l-3 1z" fill="#2d6fb0" />
              </Icon>
            </DeckButton>
            <DeckButton aria-label="Navigator">
              <Icon size={24} box="0 0 24 24">
                <circle cx="12" cy="12" r="10" fill="#f7fafc" stroke="#f39a1e" strokeWidth="2.600" />
                <path d="M10.500 6.500v-3l3 3v-3" stroke="#555" />
                <path d="M18 6l-7.500 4.500 3 3z" fill="#e23a2e" /><path d="M6 18l4.500-7.500 3 3z" fill="#2b7fd1" />
              </Icon>
            </DeckButton>
          </Sidebar>
        </Workspace>

        <StatusBar>
          <Cell $w={285}>Page 1 / 3</Cell>
          <Cell $w={267}>Default</Cell>
          <Cell $w={304} $center>English (India)</Cell>
          <Cell $w={44}>INSRT</Cell>
          <Cell $w={33}>STD</Cell>
          <Cell $w={16} />
          <Cell $w={29} />
          <Cell />
          <Cell $w={76} $center>
            <PageGlyph pages={1} color="#8896a2" />
            <PageGlyph pages={2} color="#1d5792" />
            <PageGlyph pages={2} color="#8896a2" />
          </Cell>
          <Cell $w={143}>
            <ZoomGlyph />
            <ZoomSlider type="range" aria-label="Zoom" min={20} max={600} defaultValue={330} />
            <ZoomGlyph plus />
          </Cell>
          <Cell $w={46}>152 %</Cell>
        </StatusBar>
        <Taskbar>
          <StartButton aria-label="Start">
            <Icon size={16}><path d="M0 2.300L7 1.300v6.300H0zM8 1.100L16 0v7.600H8zM0 8.500h7v6.300l-7-1zM8 8.500h8V16l-8-1.100z" fill="#fff" /></Icon>
          </StartButton>
          <SearchBox>
            <Icon size={16}><circle cx="10" cy="6" r="5.200" stroke="#222" strokeWidth="1.200" /><path d="M6.500 9.700L.5 15.500" stroke="#222" strokeWidth="1.300" /></Icon>
            <input aria-label="Search" placeholder="Type here to search" />
          </SearchBox>
          {apps.map((a) => <TaskButton key={a.n} $state={a.s} aria-label={a.n}>{a.i}</TaskButton>)}
          <Tray>
            <button aria-label="Hidden icons"><Icon size={12} box="0 0 12 12"><path d="M.5 9L6 3.500 11.500 9" stroke="#fff" strokeWidth="1.100" /></Icon></button>
            <Icon size={16}><path d="M5.500 5.500h8v6h-8z" fill="#fff" stroke="#fff" /><path d="M15.500 7v3M.5 3.500v2h4v-2zM2.500 6v5h3M1.500 1.500v2M3.500 1.500v2" stroke="#fff" /></Icon>
            <Icon size={16}><path d="M2 14A12 12 0 0 1 14 2.500M5 14a9 9 0 0 1 9-8.500M8 14a6 6 0 0 1 6-5.500" stroke="#b9c4c8" strokeWidth="1.200" /><path d="M11.500 14a3 3 0 0 1 2.500-2.500V14z" fill="#fff" /></Icon>
            <Icon size={16}><path d="M1 6h2.500L7 2.500v11L3.500 10H1z" stroke="#fff" /><path d="M9 6c1 1 1 3 0 4M11 4.500c2 2 2 5 0 7" stroke="#fff" /><path d="M13 3c3 3 3 7 0 10" stroke="#8a999e" /></Icon>
            <Clock>2:42 PM<br />8/24/2020</Clock>
            <Notify aria-label="Notifications"><Icon size={17}><path d="M.5 1.500h15v11h-5l-2.500 2.500v-2.500H.5z" stroke="#fff" /></Icon></Notify>
            <ShowDesktop aria-label="Show desktop" />
          </Tray>
        </Taskbar>
      </Desktop>
    </>
  );
}
